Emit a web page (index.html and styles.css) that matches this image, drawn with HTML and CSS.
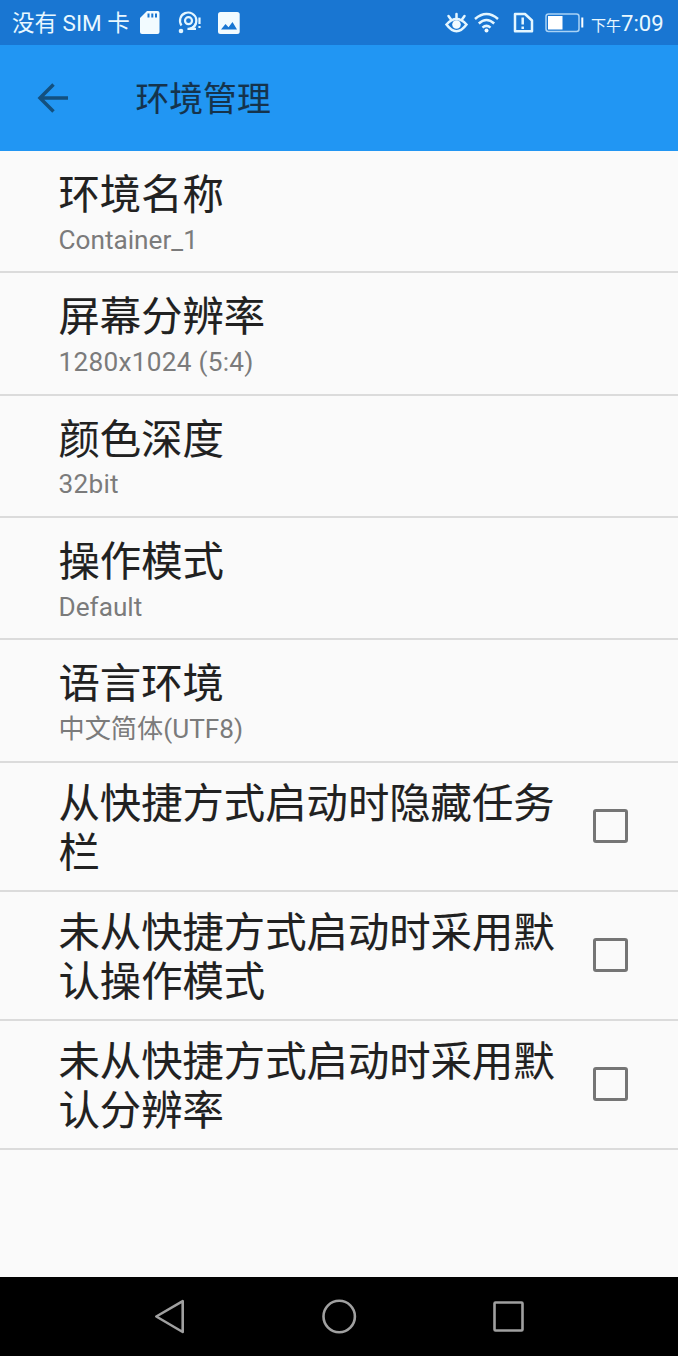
FILE: index.html
```html
<!DOCTYPE html>
<html lang="zh-CN">
<head>
<meta charset="utf-8">
<title>环境管理</title>
<link rel="stylesheet" href="styles.css">
</head>
<body>
<div class="screen">
  <div class="status">
    <div class="carrier">没有 SIM 卡</div>
    <svg class="status-left" viewBox="132 0 120 45" width="120" height="45">
      <path fill="#f2fbff" d="M147 11h10.500q2 0 2 2v19q0 2-2 2h-15.500q-2 0-2-2V18z"/>
      <path stroke="#1976d2" stroke-width="2" d="M148.500 13.500v4M152.300 13.500v4M156 13.500v4"/>
      <g fill="none" stroke="#e4f6ff" stroke-width="2.200">
        <path d="M181.500 25.500A8.200 8.200 0 1 1 187.500 28.900H196"/>
        <path d="M190 28.800A8.200 8.200 0 0 0 196 23"/>
        <circle cx="188.500" cy="20.700" r="3.500"/>
        <path d="M199.500 17.500v6.500M199.500 26v2"/>
      </g>
      <circle cx="181" cy="31" r="2.300" fill="#e4f6ff"/>
      <rect x="218" y="12" width="21.700" height="22" rx="2.500" fill="#f2fbff"/>
      <path fill="#1976d2" d="M221 29.500l4.500-5.500 3 3.200 4-5.200 4.500 7.500z"/>
    </svg>
    <svg class="status-right" viewBox="442 0 146 45" width="146" height="45">
      <g fill="none" stroke="#e4f6ff" stroke-width="2.500" stroke-linecap="round">
        <path d="M446.500 24.500Q456.500 13.500 466.500 24.500Q456.500 38 446.500 24.500z"/>
        <path d="M456.500 14v4M448.500 16l2.500 3.500M464.500 16l-2.500 3.500"/>
        <path stroke-linecap="butt" d="M475 19Q486.500 9 498 19M478.800 23.500Q486.500 16.500 494.200 23.500M482.500 27.700Q486.500 24 490.500 27.700"/>
        <path stroke-linejoin="round" d="M515 14h10l7 6.500v10.700h-17z"/>
        <path stroke-linecap="butt" d="M522.700 17.500v7M522.700 26.500v2.500"/>
      </g>
      <circle cx="456.500" cy="24.500" r="4.300" fill="#f2fbff"/>
      <circle cx="486.500" cy="30.500" r="2" fill="#f2fbff"/>
      <rect x="546" y="14" width="33" height="17.500" rx="2.500" fill="none" stroke="#a9d2f5" stroke-width="1.500"/>
      <path fill="#fff" d="M548 16h14.500v13.500H548zM581.300 17.500h2v10h-2z"/>
    </svg>
    <div class="clock"><span class="meridiem">下午</span>7:09</div>
  </div>

  <div class="toolbar">
    <svg class="back" viewBox="0 0 32 32" width="32" height="32"><path fill="none" stroke="#13507f" stroke-width="3.500" d="M31 16H3.500M16.500 2.500L3 16l13.500 13.500"/></svg>
    <div class="heading">环境管理</div>
  </div>

  <div class="list">
    <div class="row"><div class="title">环境名称</div><div class="value">Container_1</div></div>
    <div class="row"><div class="title">屏幕分辨率</div><div class="value numeric">1280x1024 (5:4)</div></div>
    <div class="row"><div class="title">颜色深度</div><div class="value numeric">32bit</div></div>
    <div class="row"><div class="title">操作模式</div><div class="value">Default</div></div>
    <div class="row"><div class="title">语言环境</div><div class="value">中文简体(UTF8)</div></div>
    <div class="row check"><div class="title">从快捷方式启动时隐藏任务栏</div><span class="box"></span></div>
    <div class="row check"><div class="title">未从快捷方式启动时采用默认操作模式</div><span class="box"></span></div>
    <div class="row check"><div class="title">未从快捷方式启动时采用默认分辨率</div><span class="box"></span></div>
  </div>

  <div class="nav">
    <svg viewBox="0 0 40 40" width="40" height="40"><path d="M6.300 20.500L32.700 5.200V36z"/></svg>
    <svg viewBox="0 0 40 40" width="40" height="40"><circle cx="19.200" cy="20.500" r="15.700"/></svg>
    <svg viewBox="0 0 40 40" width="40" height="40"><rect x="5.500" y="6.500" width="28" height="28" rx="1"/></svg>
  </div>
</div>
</body>
</html>
```
FILE: styles.css
```css
* { box-sizing: border-box; }
body { margin: 0; background: #fafafa; font-family: Roboto, "Noto Sans CJK SC", sans-serif; }
.screen { width: 678px; height: 1356px; display: flex; flex-direction: column; overflow: hidden; }

.status { height: 45px; flex: none; display: flex; background: #1976d2; color: #e9f8ff; padding-left: 12px; line-height: 46px; white-space: nowrap; }
.carrier { width: 120px; font-size: 22.5px; }
.status-left { flex: none; }
.status-right { flex: none; margin-left: 190px; }
.clock { margin-left: 3px; font-size: 22.100px; }
.meridiem { font-size: 15px; }

.toolbar { height: 106px; flex: none; display: flex; align-items: center; background: #2196f3; padding-left: 37px; }
.back { flex: none; }
.heading { margin-left: 66.500px; font: 33.8px/48px "Noto Sans CJK SC", sans-serif; color: #15334c; padding-bottom: 3px; -webkit-text-stroke: 0.150px #15334c; }

.list { flex: 1; }
.row { height: 122.350px; padding: 16px 0 0 58.500px; border-bottom: 2px solid #dbdbdb; }
.title { font: 41.350px/49px "Noto Sans CJK SC", sans-serif; color: #212121; -webkit-text-stroke: 0.120px #212121; }
.value { margin-top: 8.500px; font-size: 26.200px; line-height: 31px; color: #7b7b7b; }
.numeric { letter-spacing: 0.270px; }
.check { height: 129px; padding-top: 13px; display: flex; justify-content: space-between; padding-right: 50.500px; }
.check .title { width: 500px; }
.box { width: 35px; height: 34px; margin-top: 33px; border: 3.500px solid #757575; border-radius: 3px; flex: none; }

.nav { height: 79px; flex: none; background: #000; display: flex; justify-content: space-between; padding: 19px 149px 0 150px; }
.nav path, .nav circle, .nav rect { fill: none; stroke: #a0a0a0; stroke-width: 2.600; stroke-linejoin: round; }
```
